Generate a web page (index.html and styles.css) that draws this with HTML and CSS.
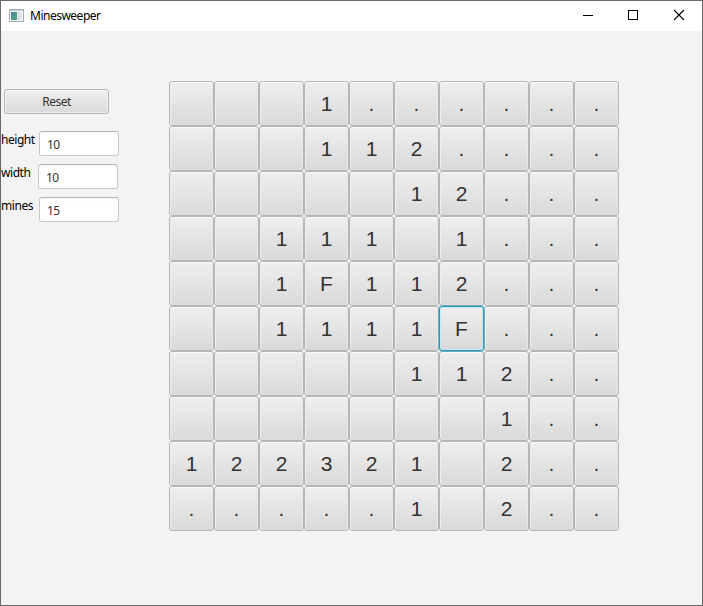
FILE: index.html
```html
<!DOCTYPE html>
<html lang="en">
<head>
<meta charset="utf-8">
<title>Minesweeper</title>
<link rel="stylesheet" href="styles.css">
</head>
<body>
<div class="window">
  <header class="titlebar">
    <svg class="app-icon" width="16" height="14" viewBox="0 0 16 14">
      <defs><linearGradient id="pane" x1="0" y1="0" x2="1" y2="1"><stop offset="0" stop-color="#4e83a0"/><stop offset="1" stop-color="#4fa978"/></linearGradient></defs>
      <rect x=".5" y=".5" width="14" height="12" fill="#f4f6f7" stroke="#a5adb2"/>
      <path d="M1 1.5h13" stroke="#c3cbd0"/>
      <rect x="2" y="3" width="6" height="8" fill="url(#pane)"/>
      <rect x="8.500" y="3" width="3" height="8" fill="#d5dcdf"/>
      <path d="M12.500 3v8" stroke="#e5e8ea"/>
    </svg>
    <h1 class="title">Minesweeper</h1>
    <div class="controls">
      <svg width="46" height="30" viewBox="0 0 46 30"><path d="M19 14.500h10" stroke="#000"/></svg>
      <svg width="46" height="30" viewBox="0 0 46 30"><rect x="18.500" y="9.500" width="9" height="9" fill="none" stroke="#000"/></svg>
      <svg width="46" height="30" viewBox="0 0 46 30"><path d="M18 9l10 10M28 9L18 19" stroke="#000" stroke-width="1.100"/></svg>
    </div>
  </header>
  <main class="content">
    <aside class="sidebar">
      <button class="reset">Reset</button>
      <label class="field"><span class="name">height</span><input value="10"></label>
      <label class="field narrow"><span class="name">width</span><input value="10"></label>
      <label class="field"><span class="name">mines</span><input value="15"></label>
    </aside>
    <div class="board" id="board"></div>
  </main>
</div>
<script src="board.js"></script>
</body>
</html>
```
FILE: styles.css
```css
* { box-sizing: border-box; }
body { margin: 0; font-family: "Noto Sans", "Open Sans", sans-serif; font-size: 12px; overflow: hidden; }
.window { width: 703px; height: 606px; border: 1px solid #6b696b; background: #f3f3f3; display: flex; flex-direction: column; }
.titlebar { height: 30px; flex: none; background: #fff; display: flex; align-items: center; padding-left: 8px; }
.app-icon { margin-right: 5px; }
.title { margin: 0; font-size: 12px; font-weight: 400; line-height: 30px; flex: 1; color: #000; letter-spacing: -0.5px; }
.controls { display: flex; }
.content { display: flex; align-items: flex-start; }
.sidebar { width: 168px; padding-top: 58px; display: flex; flex-direction: column; align-items: flex-start; }
.reset { width: 105px; height: 25px; margin: 0 0 17px 3px; padding: 0; border: 1px solid #b5b5b5; border-radius: 3px; background: linear-gradient(#efefef, #d9d9d9); box-shadow: inset 0 0 0 1px rgba(255,255,255,.5); font: 12px/22px "Noto Sans", sans-serif; color: #333; letter-spacing: -0.5px; }
.field { display: flex; height: 25px; margin-bottom: 8px; }
.name { width: 38px; line-height: 18px; color: #000; letter-spacing: -0.45px; }
.narrow .name { width: 37px; }
.field input { width: 80px; height: 25px; margin: 0; padding: 1px 7px 0; border: 1px solid #c8c8c8; border-top-color: #b5b5b5; border-radius: 3px; background: linear-gradient(#f7f7f7, #fff 4px); outline: none; font: 12px "Noto Sans", sans-serif; color: #333; letter-spacing: -0.6px; }
.board { margin-top: 50px; display: grid; grid-template-columns: repeat(10, 45px); grid-auto-rows: 45px; }
.cell { margin: 0; padding: 0; border: 1px solid #b5b5b5; border-radius: 3px; background: linear-gradient(#efefef, #d9d9d9); box-shadow: inset 0 1px #fafafa, inset 1px 0 #eee, inset -1px 0 #e9e9e9, inset 0 -1px #dedede; font: 21px/43px "Liberation Sans", Arial, sans-serif; color: #333; text-align: center; outline: none; }
.cell.focused { border-color: #2e9abb; box-shadow: inset 0 0 0 1px #bdebf6, 0 0 0 .4px #2e9abb; z-index: 1; }
```
FILE: board.js
```js
const rows = [
  "   1......",
  "   112....",
  "     12...",
  "  111 1...",
  "  1F112...",
  "  1111F...",
  "     112..",
  "       1..",
  "122321 2..",
  ".....1 2.."
];
const board = document.getElementById("board");
rows.forEach((row, y) => [...row].forEach((mark, x) => {
  const cell = document.createElement("button");
  cell.className = x === 6 && y === 5 ? "cell focused" : "cell";
  cell.textContent = mark.trim();
  board.append(cell);
}));
```
